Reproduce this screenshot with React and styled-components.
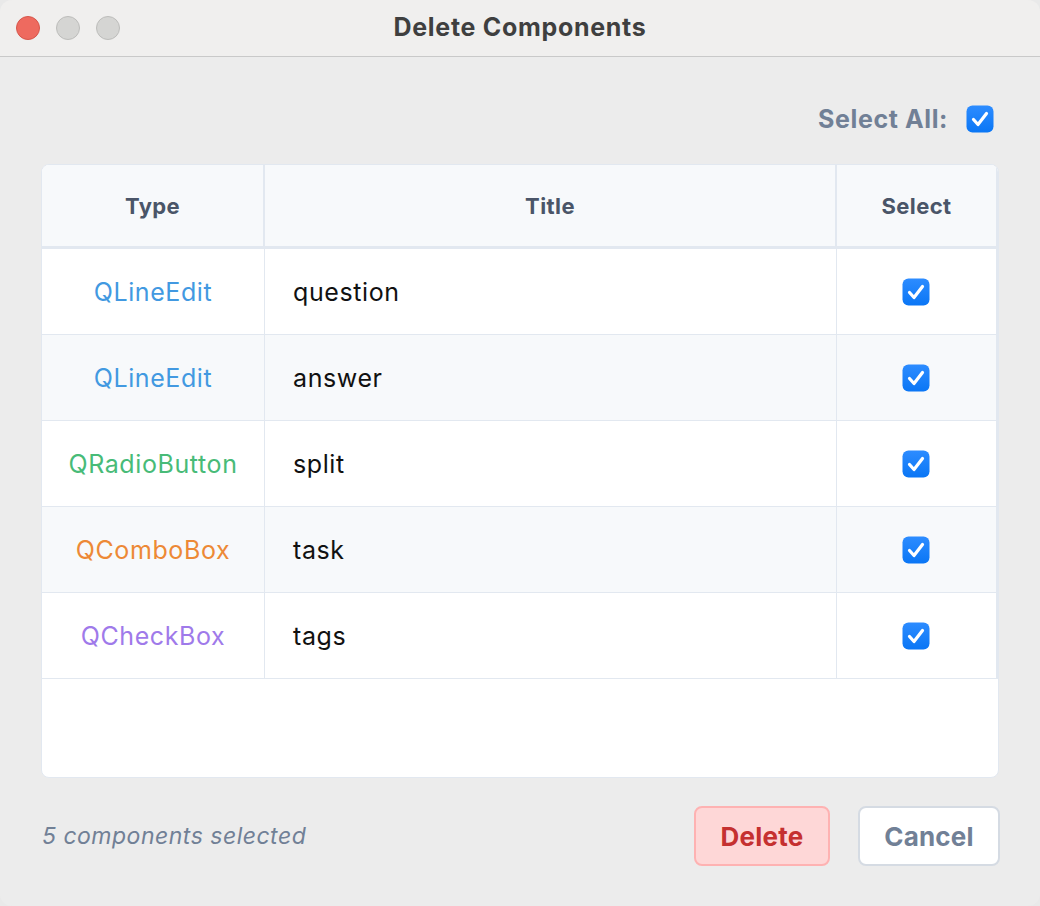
import styled, { createGlobalStyle } from "styled-components";

const GlobalStyle = createGlobalStyle`
  html, body {
    margin: 0;
    padding: 0;
    background: #e9e9e9;
  }
  * { box-sizing: border-box; }
  body {
    font-family: Inter, "Noto Sans", "Liberation Sans", sans-serif;
  }
`;

const components = [
  { type: "QLineEdit", title: "question", color: "#4299e1" },
  { type: "QLineEdit", title: "answer", color: "#4299e1" },
  { type: "QRadioButton", title: "split", color: "#48bb78" },
  { type: "QComboBox", title: "task", color: "#ed8936" },
  { type: "QCheckBox", title: "tags", color: "#9f7aea" },
];

const CheckIcon = () => (
  <svg width="28" height="28" viewBox="0 0 28 28">
    <defs>
      <linearGradient id="cb" x1="0" y1="0" x2="0" y2="1">
        <stop offset="0" stopColor="#2d8cff" />
        <stop offset="1" stopColor="#0a76f5" />
      </linearGradient>
    </defs>
    <rect x="0.5" y="0.5" width="27" height="27" rx="6" fill="url(#cb)" />
    <path d="M7.5 14.5 L12 19.5 L20.5 8.5" fill="none" stroke="#fff" strokeWidth="3.2" strokeLinecap="round" strokeLinejoin="round" />
  </svg>
);

const App = () => {
  return (
    <>
      <GlobalStyle />
      <Window>
        <TitleBar>
          <Lights>
            <Light color="#ee6a5f" edge="#d6564b" />
            <Light color="#d5d5d3" edge="#bdbdbb" />
            <Light color="#d5d5d3" edge="#bdbdbb" />
          </Lights>
          <WindowTitle>Delete Components</WindowTitle>
        </TitleBar>
        <Body>
          <SelectAllRow>
            <SelectAllLabel>Select All:</SelectAllLabel>
            <CheckIcon />
          </SelectAllRow>
          <Table>
            <HeaderRow>
              <HeadCell>Type</HeadCell>
              <HeadCell>Title</HeadCell>
              <HeadCell>Select</HeadCell>
            </HeaderRow>
            {components.map((c, i) => (
              <Row key={i} alt={i % 2 === 1}>
                <TypeCell color={c.color}>{c.type}</TypeCell>
                <TitleCell>{c.title}</TitleCell>
                <SelectCell>
                  <CheckIcon />
                </SelectCell>
              </Row>
            ))}
          </Table>
          <Footer>
            <Status>5 components selected</Status>
            <Buttons>
              <DeleteButton>Delete</DeleteButton>
              <CancelButton>Cancel</CancelButton>
            </Buttons>
          </Footer>
        </Body>
      </Window>
    </>
  );
};

export default App;

const Window = styled.div`
  width: 1040px;
  height: 906px;
  background: #ececec;
  border-radius: 12px;
  overflow: hidden;
  display: flex;
  flex-direction: column;
`;

const TitleBar = styled.div`
  height: 57px;
  flex-shrink: 0;
  background: #f0efee;
  border-bottom: 1px solid #c9c9c9;
  display: flex;
  align-items: center;
  justify-content: center;
  position: relative;
`;

const Lights = styled.div`
  position: absolute;
  left: 16px;
  top: 16px;
  display: flex;
  gap: 16px;
`;

const Light = styled.span`
  width: 24px;
  height: 24px;
  border-radius: 50%;
  background: ${(p) => p.color};
  border: 1px solid ${(p) => p.edge};
`;

const WindowTitle = styled.div`
  font-size: 25px;
  font-weight: 700;
  letter-spacing: 0.7px;
  color: #3f3f3f;
  margin-top: -2px;
`;

const Body = styled.div`
  flex: 1;
  padding: 47px 41px 0 41px;
  display: flex;
  flex-direction: column;
`;

const SelectAllRow = styled.div`
  display: flex;
  justify-content: flex-end;
  align-items: center;
  gap: 18px;
  padding-right: 5px;
  height: 30px;
`;

const SelectAllLabel = styled.span`
  font-size: 25px;
  font-weight: 700;
  letter-spacing: 0.6px;
  color: #718096;
`;

const Table = styled.div`
  margin-top: 30px;
  width: 958px;
  height: 614px;
  background: #fff;
  border: 1px solid #e2e8f0;
  border-radius: 8px;
  overflow: hidden;
`;

const HeaderRow = styled.div`
  display: grid;
  grid-template-columns: 223px 572px 1fr;
  height: 84px;
  background: #f7f9fb;
  border-bottom: 3px solid #e2e8f0;
`;

const HeadCell = styled.div`
  display: flex;
  align-items: center;
  justify-content: center;
  font-size: 22px;
  font-weight: 700;
  letter-spacing: 0.4px;
  color: #4a5568;
  border-right: 2px solid #e2e8f0;
`;

const Row = styled.div`
  display: grid;
  grid-template-columns: 223px 572px 1fr;
  height: 86px;
  background: ${(p) => (p.alt ? "#f7f9fb" : "#fff")};
  border-bottom: 1px solid #e2e8f0;
`;

const TypeCell = styled.div`
  display: flex;
  align-items: center;
  justify-content: center;
  font-size: 25px;
  letter-spacing: 0.6px;
  color: ${(p) => p.color};
  border-right: 1px solid #e2e8f0;
  padding-top: 1px;
`;

const TitleCell = styled.div`
  display: flex;
  align-items: center;
  padding: 1px 0 0 28px;
  font-size: 25px;
  letter-spacing: 0.6px;
  color: #111;
  border-right: 1px solid #e2e8f0;
`;

const SelectCell = styled.div`
  display: flex;
  align-items: center;
  justify-content: center;
  border-right: 2px solid #e2e8f0;
  padding-right: 2px;
`;

const Footer = styled.div`
  display: flex;
  align-items: center;
  justify-content: space-between;
  margin-top: 28px;
`;

const Status = styled.span`
  font-size: 23px;
  font-style: italic;
  letter-spacing: 0.5px;
  color: #718096;
  padding-left: 1px;
`;

const Buttons = styled.div`
  display: flex;
  gap: 28px;
  margin-right: -1px;
`;

const BaseButton = styled.button`
  height: 60px;
  border-radius: 8px;
  font-family: inherit;
  font-size: 26px;
  font-weight: 700;
  letter-spacing: 0.2px;
  padding: 0;
  cursor: pointer;
`;

const DeleteButton = styled(BaseButton)`
  width: 136px;
  background: #fed7d7;
  border: 2px solid #feb2b2;
  color: #c53030;
`;

const CancelButton = styled(BaseButton)`
  width: 142px;
  background: #fff;
  border: 2px solid #d5dbe3;
  color: #718096;
`;
